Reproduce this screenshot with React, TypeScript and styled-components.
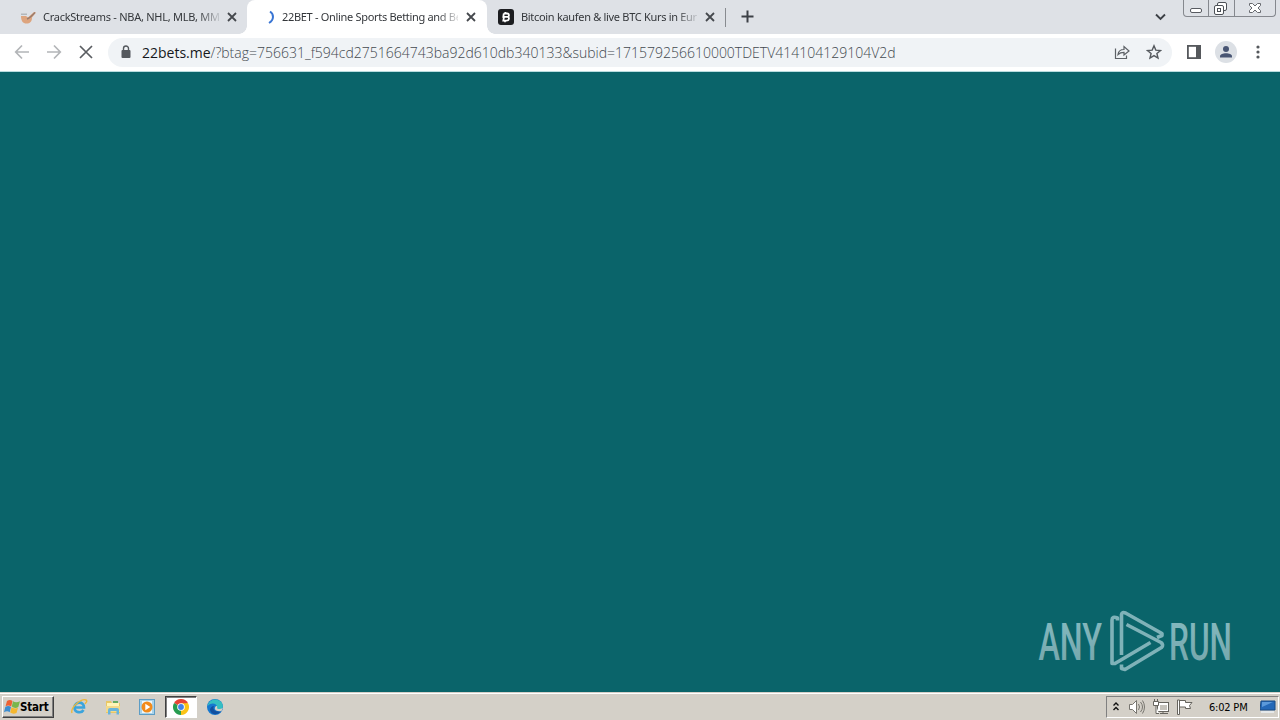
import styled, { createGlobalStyle } from 'styled-components';

const GlobalStyle = createGlobalStyle`
  * {
    box-sizing: border-box;
  }

  body {
    margin: 0;
    overflow: hidden;
    font-family: 'DejaVu Sans Condensed', 'DejaVu Sans', sans-serif;
  }

  svg {
    display: block;
    flex: none;
  }
`;

const Screen = styled.div`
  display: flex;
  flex-direction: column;
  width: 1280px;
  height: 720px;
  background: #0a646a;
`;

const TabStrip = styled.div`
  display: flex;
  height: 34px;
  flex: none;
  background: #dee1e6;
`;

const Tab = styled.div<{ $active?: boolean; $width: number; $left: number }>`
  display: flex;
  align-items: center;
  position: relative;
  width: ${(p) => p.$width}px;
  height: 34px;
  padding-left: ${(p) => p.$left}px;
  border-radius: 8px 8px 0 0;
  background: ${(p) => (p.$active ? '#fff' : 'transparent')};

  ${(p) =>
    p.$active &&
    `
    &::before,
    &::after {
      content: '';
      position: absolute;
      bottom: 0;
      width: 8px;
      height: 8px;
    }

    &::before {
      left: -8px;
      background: radial-gradient(circle at 0 0, #dee1e6 7.5px, #fff 8px);
    }

    &::after {
      right: -8px;
      background: radial-gradient(circle at 100% 0, #dee1e6 7.5px, #fff 8px);
    }
  `}
`;

const TabTitle = styled.div<{ $spacing: number }>`
  width: 176px;
  margin: 0 8px 0 7px;
  white-space: nowrap;
  font-family: 'Noto Sans', sans-serif;
  font-size: 11px;
  line-height: 16px;
  letter-spacing: ${(p) => p.$spacing}px;
  color: #34373b;
  mask-image: linear-gradient(90deg, #000 155px, transparent 180px);
`;

const TabDivider = styled.div`
  width: 1px;
  height: 19px;
  margin: 8px 0 0 -1px;
  background: #888b90;
`;

const NewTab = styled.div`
  padding: 10px 0 0 15px;
`;

const StripEnd = styled.div`
  display: flex;
  margin-left: auto;
  padding-right: 4px;
`;

const TabSearch = styled.div`
  padding: 13px 17px 0 0;
`;

const WindowButtons = styled.div`
  display: flex;
  width: 93px;
  height: 17px;
  border: 1px solid #85888e;
  border-top: 0;
  border-radius: 0 0 4px 4px;
`;

const WindowButton = styled.div<{ $width: number }>`
  display: flex;
  justify-content: center;
  width: ${(p) => p.$width}px;
  height: 16px;

  & + & {
    border-left: 1px solid #85888e;
  }
`;

const Toolbar = styled.div`
  display: flex;
  align-items: center;
  height: 38px;
  flex: none;
  padding: 0 14px 1px;
  background: #fff;
  border-bottom: 1px solid #b9dcdf;
`;

const NavButtons = styled.div`
  display: flex;
  gap: 16px;
  width: 94px;
`;

const AddressBar = styled.div`
  display: flex;
  align-items: center;
  width: 1064px;
  height: 29px;
  padding: 0 10px 0 10px;
  border-radius: 15px;
  background: #f0f3f6;
`;

const Url = styled.div`
  flex: 1;
  margin-left: 8px;
  padding-top: 2px;
  white-space: nowrap;
  font-family: 'Open Sans', sans-serif;
  font-weight: 300;
  font-size: 14px;
  line-height: 20px;
  color: #43494f;
`;

const Host = styled.span`
  color: #15181b;
  font-weight: 400;
`;

const AddressActions = styled.div`
  display: flex;
  gap: 16px;
`;

const ToolbarActions = styled.div`
  display: flex;
  align-items: center;
  gap: 13px;
  margin-left: 14px;
`;

const Page = styled.div`
  display: flex;
  flex: 1;
  align-items: flex-end;
  justify-content: flex-end;
  padding: 0 45px 18px 0;
`;

const Taskbar = styled.div`
  display: flex;
  align-items: center;
  height: 28px;
  flex: none;
  padding: 1px 1px 0 2px;
  background: #d4d0c8;
  border-top: 1px solid #d4d0c8;
  box-shadow: inset 0 1px #fff;
`;

const StartButton = styled.div`
  display: flex;
  align-items: center;
  width: 52px;
  height: 22px;
  padding-left: 1px;
  border: 1px solid;
  border-color: #fff #404040 #404040 #fff;
  box-shadow: inset -1px -1px #808080;
  font-size: 11.5px;
  font-weight: 700;
  letter-spacing: -0.2px;
  color: #000;
`;

const QuickLaunch = styled.div`
  display: flex;
  margin-left: 9px;
`;

const TaskItem = styled.div<{ $active?: boolean }>`
  display: flex;
  align-items: center;
  justify-content: center;
  width: 32px;
  height: 22px;
  margin-right: 2px;
  background: ${(p) => (p.$active ? '#fff' : 'transparent')};
  border: 1px solid transparent;
  ${(p) => p.$active && 'border-color: #404040 #fff #fff #404040; box-shadow: inset 1px 1px #808080;'}
`;

const Tray = styled.div`
  display: flex;
  align-items: center;
  width: 173px;
  height: 22px;
  margin-left: auto;
  padding-left: 5px;
  border: 1px solid;
  border-color: #808080 #fff #fff #808080;
`;

const TrayIcons = styled.div`
  display: flex;
  align-items: center;
  gap: 8px;
`;

const Clock = styled.div`
  width: 43px;
  margin: 0 8px 0 16px;
  white-space: nowrap;
  font-size: 11px;
  letter-spacing: -0.2px;
  color: #000;
`;

const CloseIcon = () => (
  <svg width="10" height="10" viewBox="0 0 10 10" stroke="#45484d" strokeWidth="1.8">
    <path d="M1 1l8 8M9 1L1 9" />
  </svg>
);

const StreamIcon = () => (
  <svg width="16" height="16" viewBox="0 0 16 16">
    <path d="M1 4.500h6v1.500H1z" fill="#b3b7bb" />
    <path d="M1 7h5l2 1.500L14 3l2 .500-4 5c0 4-2 6-5.500 6S1 12 1 7z" fill="#dda47e" />
    <path d="M7 10Q10 9 15 3.500" fill="none" stroke="#9b7c6c" strokeWidth="1.400" />
  </svg>
);

const SpinnerIcon = () => (
  <svg width="16" height="16" viewBox="0 0 16 16" fill="none">
    <path d="M11 2.500C15 5 15.300 11 10 14" stroke="#3975d4" strokeWidth="2" />
  </svg>
);

const BitcoinIcon = () => (
  <svg width="16" height="16" viewBox="0 0 16 16">
    <rect width="16" height="16" rx="3" fill="#1c1d20" />
    <path
      d="M5.800 4.500h3.400c2.400 0 2.200 3.200.3 3.400 2.200.2 1.800 3.800-1 3.800H5.300L6 7.900h3.500M5.800 4.500L5.300 7.900H6"
      fill="none"
      stroke="#fff"
      strokeWidth="1.800"
    />
    <path d="M7.500 3v1M7 12v1.200" stroke="#fff" strokeWidth="1.600" />
  </svg>
);

const ArrowIcon = ({ flip = false }) => (
  <svg width="16" height="16" viewBox="0 0 16 16" fill="none" stroke="#b3b5b8" strokeWidth="1.7">
    <path d={flip ? 'M1 8h13M8 1.500L14.300 8 8 14.500' : 'M15 8H2M8 1.500L1.700 8 8 14.500'} />
  </svg>
);

const Watermark = () => (
  <svg width="200" height="68" viewBox="1035 606 200 68">
    <defs>
      <linearGradient id="mark" x1="0" y1="0" x2="0" y2="1">
        <stop offset="0" stopColor="#86bcc2" />
        <stop offset="1" stopColor="#74a4a9" />
      </linearGradient>
    </defs>
    <g fill="url(#mark)" fontFamily="Roboto, sans-serif" fontWeight="500" fontSize="52.5">
      <text x="1038.500" y="659.500" textLength="63.500" lengthAdjust="spacingAndGlyphs">ANY</text>
      <text x="1169" y="659.500" textLength="63" lengthAdjust="spacingAndGlyphs">RUN</text>
    </g>
    <g fill="none" stroke="#7fb2b8" strokeWidth="3.600" strokeLinejoin="round">
      <path d="M1117.500 620.500V618Q1112 616 1112 620V663.500H1115L1150.500 642.500" />
      <path d="M1121.500 655V614.500Q1122 611.500 1125.500 613L1162 633.500V635.500L1157 637.500" />
      <path d="M1121.500 664.500V668.500L1125 669.500L1161.500 647.500Q1164 645 1161 642.500L1126.500 624.500" />
    </g>
  </svg>
);

const App = () => {
  return (
    <Screen>
      <GlobalStyle />
      <TabStrip>
        <Tab $width={247} $left={20}>
          <StreamIcon />
          <TabTitle $spacing={-0.26}>CrackStreams - NBA, NHL, MLB, MMA</TabTitle>
          <CloseIcon />
        </Tab>
        <Tab $active $width={240} $left={12}>
          <SpinnerIcon />
          <TabTitle $spacing={-0.31}>22BET - Online Sports Betting and Be</TabTitle>
          <CloseIcon />
        </Tab>
        <Tab $width={239} $left={11}>
          <BitcoinIcon />
          <TabTitle $spacing={-0.31}>Bitcoin kaufen &amp; live BTC Kurs in Eur</TabTitle>
          <CloseIcon />
        </Tab>
        <TabDivider />
        <NewTab>
          <svg width="13" height="13" viewBox="0 0 13 13" stroke="#3c4046" strokeWidth="2">
            <path d="M6.500.5v12M.5 6.500h12" />
          </svg>
        </NewTab>
        <StripEnd>
          <TabSearch>
            <svg width="11" height="8" viewBox="0 0 11 8" fill="none" stroke="#3c4046" strokeWidth="1.900">
              <path d="M1 1.500l4.500 4.500L10 1.500" />
            </svg>
          </TabSearch>
          <WindowButtons>
            <WindowButton $width={24}>
              <svg width="24" height="16" viewBox="0 0 24 16">
                <rect x="6.500" y="8.500" width="11" height="4" rx="1.500" fill="#fff" stroke="#585b61" />
              </svg>
            </WindowButton>
            <WindowButton $width={26}>
              <svg width="24" height="16" viewBox="0 0 24 16" fill="#fff" stroke="#4c5056">
                <rect x="8.500" y="2.500" width="9" height="8" rx="1.500" />
                <rect x="5.500" y="5.500" width="9" height="9" rx="1.500" />
                <rect x="8.500" y="8.500" width="3" height="3" />
              </svg>
            </WindowButton>
            <WindowButton $width={42}>
              <svg width="14" height="16" viewBox="0 0 14 16">
                <path
                  d="M1.500 3.500h3L7 6l2.500-2.500h3v2L10 8l2.500 2.500v2h-3L7 10l-2.500 2.500h-3v-2L4 8 1.500 5.500z"
                  fill="#fff"
                  stroke="#66696e"
                />
              </svg>
            </WindowButton>
          </WindowButtons>
        </StripEnd>
      </TabStrip>

      <Toolbar>
        <NavButtons>
          <ArrowIcon />
          <ArrowIcon flip />
          <svg width="16" height="16" viewBox="0 0 16 16" stroke="#5a5d61" strokeWidth="1.700">
            <path d="M2 2l12 12M14 2L2 14" />
          </svg>
        </NavButtons>
        <AddressBar>
          <svg width="16" height="16" viewBox="0 0 16 16">
            <rect x="3.500" y="6" width="9" height="8" rx="1" fill="#55595e" />
            <path d="M5.500 7V4.500a2.500 2.500 0 015 0V7" fill="none" stroke="#55595e" strokeWidth="1.400" />
          </svg>
          <Url>
            <Host>22bets.me</Host>/?btag=756631_f594cd2751664743ba92d610db340133&amp;subid=171579256610000TDETV414104129104V2d
          </Url>
          <AddressActions>
            <svg width="16" height="16" viewBox="0 0 16 16" fill="none" stroke="#5d6166" strokeWidth="1.200">
              <path d="M1.500 4.500v10h11v-3" />
              <path d="M4 10.500c.5-4 3-5 6-5V2.500l5 4.500-5 4V8.300c-3 0-4.500.700-6 2.200z" />
            </svg>
            <svg width="16" height="16" viewBox="0 0 16 16" fill="none" stroke="#55595e" strokeWidth="1.400">
              <path d="M8 1.800l1.800 4.300 4.700.4-3.600 3 1.100 4.600L8 11.600l-4 2.500 1.100-4.600-3.600-3 4.700-.4z" />
            </svg>
          </AddressActions>
        </AddressBar>
        <ToolbarActions>
          <svg width="16" height="16" viewBox="0 0 16 16">
            <rect x="1.900" y="1.900" width="12.200" height="12.200" fill="#fff" stroke="#55585c" strokeWidth="1.800" />
            <path d="M10 2h4v12h-4z" fill="#55585c" />
          </svg>
          <svg width="22" height="22" viewBox="0 0 22 22">
            <circle cx="11" cy="11" r="11" fill="#dce0e5" />
            <circle cx="11" cy="8" r="3" fill="#485573" />
            <path d="M5 16.500v-1.200c0-4 12-4 12 0v1.200z" fill="#485573" />
          </svg>
          <svg width="16" height="16" viewBox="0 0 16 16" fill="#55585c">
            <circle cx="8" cy="3" r="1.600" />
            <circle cx="8" cy="8" r="1.600" />
            <circle cx="8" cy="13" r="1.600" />
          </svg>
        </ToolbarActions>
      </Toolbar>

      <Page>
        <Watermark />
      </Page>

      <Taskbar>
        <StartButton>
          <svg width="16" height="16" viewBox="0 0 16 16">
            <path d="M3 2q3-2 5.500 0L7.200 7.500Q4 5.500 1.500 7.500z" fill="#ed6133" />
            <path d="M9 2.200q3 2 7 0L14.300 8q-3.500 2-6.500-.500z" fill="#79b64b" />
            <path d="M1.300 8q3-2 5.700 0L5.700 13.200q-2.500-2-5.700 0z" fill="#3d8dd0" />
            <path d="M7.500 8.300q3 2 6.500.500L12.500 14q-3.500 1.500-6.300-.500z" fill="#f5b72f" />
          </svg>
          Start
        </StartButton>
        <QuickLaunch>
          <TaskItem>
            <svg width="18" height="18" viewBox="0 0 18 18" fill="none">
              <path d="M4.500 9.500h9.500c0-7-9.500-6-9.500 0 0 5.500 7 6 9 2.500" stroke="#3ba4dc" strokeWidth="2.600" />
              <path d="M2 15C0 9 12 0 16 2c2 1-.500 3-1 4" stroke="#edb83c" strokeWidth="1.400" />
            </svg>
          </TaskItem>
          <TaskItem>
            <svg width="16" height="16" viewBox="0 0 16 16">
              <path d="M1 2h5l1 2h8v10H1z" fill="#e9c765" />
              <path d="M2 4h12v4H2z" fill="#fff4b7" />
              <path d="M8 2h5v2H8z" fill="#66aa62" />
              <path d="M1 7h14v6H1z" fill="#f2d98b" />
              <path d="M3 15.500V11q0-2 2-2h7q2 0 2 2v4.500h-2.500V12h-6v3.500z" fill="#68b4dc" />
            </svg>
          </TaskItem>
          <TaskItem>
            <svg width="16" height="16" viewBox="0 0 16 16">
              <rect x=".5" y=".500" width="15" height="15" fill="#a9d3ea" stroke="#5d9dc5" />
              <rect x="3" y="2" width="10" height="12" fill="#eef7fb" />
              <circle cx="8" cy="8" r="5.500" fill="#f28b1b" />
              <path d="M6.300 4.700l5 3.300-5 3.300z" fill="#fff" />
            </svg>
          </TaskItem>
          <TaskItem $active>
            <svg width="16" height="16" viewBox="0 0 16 16">
              <path d="M8 8L1.070 4a8 8 0 0113.860 0z" fill="#e64435" />
              <path d="M8 8l6.930-4A8 8 0 018 16z" fill="#fbc316" />
              <path d="M8 8v8A8 8 0 011.070 4z" fill="#279c50" />
              <path d="M8 4.300h7L11.200 10 8 16l3-6z" fill="#fbc316" />
              <circle cx="8" cy="8" r="3.800" fill="#fff" />
              <circle cx="8" cy="8" r="2.900" fill="#4182e8" />
            </svg>
          </TaskItem>
          <TaskItem>
            <svg width="16" height="16" viewBox="0 0 16 16">
              <circle cx="8" cy="8" r="8" fill="#1678cf" />
              <path d="M.5 7C2 0 9-1 13 2c3 2 4 7 1 8-2 1-5 0-4-2 0-4-6-5-9.500-1z" fill="#35bfc2" />
              <path d="M7 7c-2 3 1 7 7 5-3 5-10 4-11-1 0-2 2-4 4-4z" fill="#124f9f" />
              <path d="M9 7c2 0 1 2 1 2 1 2 4 1 6-.500L14.500 12C9 13 6 10 9 7z" fill="#d4d0c8" />
            </svg>
          </TaskItem>
        </QuickLaunch>
        <Tray>
          <TrayIcons>
            <svg width="8" height="12" viewBox="0 0 8 12" fill="none" stroke="#111" strokeWidth="1.400">
              <path d="M1.500 4.500L4 2l2.500 2.500M1.500 9L4 6.500 6.500 9" />
            </svg>
            <svg width="17" height="16" viewBox="0 0 17 16" fill="none" stroke="#77756f">
              <path d="M1.500 5.500h3l4-4v13l-4-4h-3z" fill="#fff" />
              <path d="M10.500 5q2 3 0 6M12.500 3q4 5 0 10M14.500 1.500q4 6.500 0 13" />
            </svg>
            <svg width="16" height="16" viewBox="0 0 16 16" fill="#fff" stroke="#66645e">
              <rect x="4.500" y="3.500" width="11" height="9" />
              <rect x="7" y="6" width="7" height="5" fill="#c5c2bb" stroke="none" />
              <path d="M7 14.500h8M10 13v2" />
              <path d="M1.500 0v2M4.500 0v2M.5 2.500h5v4h-5zM3 6.500v8h3" />
            </svg>
            <svg width="16" height="16" viewBox="0 0 16 16" fill="#fff" stroke="#66645e">
              <path d="M2.500 1.500h6v2h6.500l-2.500 3 1 3h-5v-1.500h-6z" />
              <path d="M.5 1v14.500h2V1z" />
            </svg>
          </TrayIcons>
          <Clock>6:02 PM</Clock>
          <svg width="16" height="14" viewBox="0 0 16 14">
            <path d="M1 1h14v9H0z" fill="#2468b7" stroke="#194b83" />
            <path d="M2 2h11L2 7z" fill="#5b99da" />
            <path d="M1 12h13" stroke="#e5e8e9" strokeWidth="2" />
          </svg>
        </Tray>
      </Taskbar>
    </Screen>
  );
};

export default App;
